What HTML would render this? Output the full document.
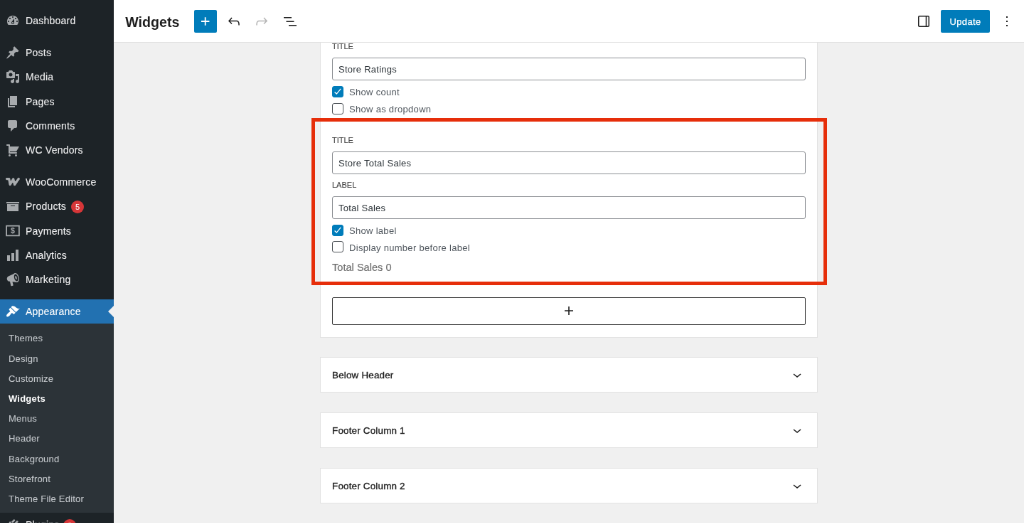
<!DOCTYPE html>
<html lang="en">
<head>
<meta charset="utf-8">
<title>Widgets</title>
<style>
*{box-sizing:border-box;margin:0;padding:0}
html,body{width:1024px;height:523px;overflow:hidden;background:#f0f0f0}
body{font-family:"Liberation Sans",Arial,Helvetica,sans-serif;color:#1e1e1e;-webkit-font-smoothing:antialiased}
#stage{will-change:transform;position:absolute;left:0;top:0;width:1440px;height:736px;transform:scale(0.711111);transform-origin:0 0;background:#f0f0f0;overflow:hidden}
.abs{position:absolute}
/* ---------- sidebar ---------- */
#side{position:absolute;left:0;top:0;width:160px;height:736px;background:#1d2327}
.mi{position:absolute;left:0;width:160px;height:34.2px;color:#f0f0f1;font-size:14px;line-height:34.2px;white-space:nowrap}
.mi .tx{position:absolute;left:36px;top:0;letter-spacing:.22px;-webkit-text-stroke:.1px #f0f0f1}
.mi svg{position:absolute;left:8px;top:7px;width:20px;height:20px;fill:#a7aaad}
.mi.cur{background:#2271b1;color:#fff}
.mi.cur svg{fill:#fff}
.mi.cur:after{content:"";position:absolute;right:0;top:9px;border:8px solid transparent;border-right-color:#f0f0f1}
.badge{position:absolute;width:18px;height:18px;border-radius:9px;background:#d63638;color:#fff;font-size:11px;line-height:18px;text-align:center}
#sub{position:absolute;left:0;top:455.4px;width:160px;height:266px;background:#2c3338}
.si{position:absolute;left:12px;font-size:13px;line-height:18.2px;color:#c2c6ca;white-space:nowrap;letter-spacing:.2px;-webkit-text-stroke:.1px #c2c6ca}
.si.cur{color:#fff;font-weight:bold;-webkit-text-stroke:0}
/* ---------- header ---------- */
#hdr{position:absolute;left:160px;top:0;width:1280px;height:60px;background:#fff;border-bottom:1px solid #e0e0e0}
#hdr h1{position:absolute;left:16.300px;top:17.700px;font-size:19.600px;line-height:26px;font-weight:bold;color:#1e1e1e;letter-spacing:0}
.btn-blue{position:absolute;background:#007cba;border-radius:2px;color:#fff}
/* ---------- content ---------- */
.panel{position:absolute;left:450px;width:700px;background:#fff;border:1px solid #e2e2e2}
.lbl{position:absolute;left:467px;font-size:11px;line-height:14px;text-transform:uppercase;color:#444;letter-spacing:0;margin-top:-.5px;-webkit-text-stroke:.12px #444}
.inp{position:absolute;left:467px;width:666px;height:32px;border:1px solid #8c8f94;border-radius:3px;background:#fff;font-size:13px;line-height:31.2px;padding-left:8px;color:#2c3338;white-space:nowrap;letter-spacing:.25px}
.cb{position:absolute;left:467px;width:16px;height:16px;border:1.2px solid #4d5257;border-radius:3px;background:#fff}
.cb.on{background:#007cba;border-color:#007cba}
.cb svg{position:absolute;left:-1px;top:-1px;width:16px;height:16px}
.cbl{position:absolute;left:491px;font-size:13px;line-height:17.2px;color:#50575e;white-space:nowrap;letter-spacing:.3px}
.pt{position:absolute;left:467px;font-size:13.400px;line-height:19px;color:#1e1e1e;white-space:nowrap;-webkit-text-stroke:.35px #1e1e1e;letter-spacing:.2px}
.chev{position:absolute;left:1109px;width:24px;height:24px}
</style>
</head>
<body>
<div id="stage">

<!-- =============== CONTENT =============== -->
<div class="panel" style="top:40px;height:435px"></div>

<div class="lbl" style="top:58px">Title</div>
<div class="inp" style="top:81px">Store Ratings</div>
<div class="cb on" style="top:121px"><svg viewBox="0 0 16 16"><path d="M3.6 8.6l2.7 2.5L12.2 3.9" fill="none" stroke="#fff" stroke-width="1.3"/></svg></div>
<div class="cbl" style="top:121px">Show count</div>
<div class="cb" style="top:145px"></div>
<div class="cbl" style="top:145px">Show as dropdown</div>

<div class="lbl" style="top:190px">Title</div>
<div class="inp" style="top:213px">Store Total Sales</div>
<div class="lbl" style="top:253px">Label</div>
<div class="inp" style="top:276px">Total Sales</div>
<div class="cb on" style="top:315.500px"><svg viewBox="0 0 16 16"><path d="M3.6 8.6l2.7 2.5L12.2 3.9" fill="none" stroke="#fff" stroke-width="1.3"/></svg></div>
<div class="cbl" style="top:316px">Show label</div>
<div class="cb" style="top:339.300px"></div>
<div class="cbl" style="top:340px">Display number before label</div>
<div class="abs" style="left:467px;top:365px;font-size:14.600px;line-height:22px;color:#6d6d6d;-webkit-text-stroke:.15px #6d6d6d;white-space:nowrap">Total Sales 0</div>

<div class="abs" style="left:467px;top:418px;width:666px;height:39px;border:1px solid #3c3c3c;border-radius:2px;background:#fff"></div>
<svg class="abs" style="left:788px;top:425px;width:24px;height:24px" viewBox="0 0 24 24"><path d="M18 11.2h-5.2V6h-1.600v5.200H6v1.600h5.200V18h1.600v-5.200H18z" fill="#1e1e1e"/></svg>

<div class="panel" style="top:502px;height:50px"></div>
<div class="pt" style="top:518px">Below Header</div>
<svg class="chev" style="top:515px" viewBox="0 0 24 24"><path d="M17.500 11.600L12 16l-5.500-4.400.900-1.200L12 14l4.500-3.600 1 1.200z" fill="#1e1e1e"/></svg>

<div class="panel" style="top:580px;height:50px"></div>
<div class="pt" style="top:596px">Footer Column 1</div>
<svg class="chev" style="top:593px" viewBox="0 0 24 24"><path d="M17.500 11.600L12 16l-5.500-4.400.900-1.200L12 14l4.500-3.600 1 1.200z" fill="#1e1e1e"/></svg>

<div class="panel" style="top:658px;height:50px"></div>
<div class="pt" style="top:674px">Footer Column 2</div>
<svg class="chev" style="top:671px" viewBox="0 0 24 24"><path d="M17.500 11.600L12 16l-5.500-4.400.900-1.200L12 14l4.500-3.600 1 1.200z" fill="#1e1e1e"/></svg>

<!-- red annotation -->
<div class="abs" style="left:438.400px;top:166.300px;width:724.600px;height:234.800px;border:5.400px solid #e62e0a"></div>

<!-- =============== HEADER =============== -->
<div id="hdr">
  <h1>Widgets</h1>
  <div class="btn-blue" style="left:113px;top:14px;width:32px;height:32px">
    <svg style="position:absolute;left:4px;top:4px;width:24px;height:24px" viewBox="0 0 24 24"><path d="M17.400 11.100h-4.800V6.300h-1.800v4.800H6v1.800h4.800v4.800h1.800v-4.800h4.800z" fill="#fff"/></svg>
  </div>
  <svg class="abs" style="left:157px;top:18px;width:24px;height:24px" viewBox="0 0 24 24"><path d="M18.300 11.700c-.600-.600-1.400-.900-2.300-.900H6.700l2.900-3.300-1.100-1-4.500 5L8.500 16l1-1-2.700-2.700H16c.5 0 .9.200 1.300.5 1 1 1 3.400 1 4.500v.3h1.500v-.2c0-1.500 0-4.300-1.500-5.700z" fill="#1e1e1e"/></svg>
  <svg class="abs" style="left:196px;top:18px;width:24px;height:24px" viewBox="0 0 24 24"><path d="M15.600 6.500l-1.100 1 2.900 3.300H8c-.9 0-1.700.3-2.300.9-1.400 1.500-1.400 4.200-1.400 5.600v.2h1.500v-.3c0-1.100 0-3.500 1-4.500.3-.3.700-.5 1.300-.5h9.200L14.500 15l1.100 1.100 4.600-4.600-4.600-5z" fill="#b4b4b4"/></svg>
  <svg class="abs" style="left:236px;top:18px;width:24px;height:24px" viewBox="0 0 24 24"><path d="M3 6h11v1.500H3V6zm3.500 5.500h11V13h-11v-1.500zM10 17h11v1.500H10V17z" fill="#1e1e1e"/></svg>

  <svg class="abs" style="left:1127px;top:18px;width:24px;height:24px" viewBox="0 0 24 24"><path d="M18 4H6c-1.100 0-2 .9-2 2v12c0 1.100.9 2 2 2h12c1.100 0 2-.9 2-2V6c0-1.100-.9-2-2-2zm-3.300 14.500H6c-.3 0-.5-.2-.5-.5V6c0-.3.2-.5.5-.5h8.700v13zm3.800-.5c0 .3-.2.500-.5.500h-1.800v-13H18c.3 0 .5.200.5.500v12z" fill="#1e1e1e"/></svg>
  <div class="btn-blue" style="left:1163px;top:14px;width:69px;height:32px;font-size:13px;line-height:34px;text-align:center;letter-spacing:.35px;-webkit-text-stroke:.25px #fff">Update</div>
  <svg class="abs" style="left:1244px;top:18px;width:24px;height:24px" viewBox="0 0 24 24"><path d="M13 19h-2v-2h2v2zm0-6h-2v-2h2v2zm0-6h-2V5h2v2z" fill="#1e1e1e"/></svg>
</div>

<!-- =============== SIDEBAR =============== -->
<div id="side">
  <div class="mi" style="top:12.0px"><svg viewBox="0 0 20 20"><path d="M3.760 16h12.480c1.100-1.370 1.760-3.110 1.760-5 0-4.420-3.580-8-8-8s-8 3.580-8 8c0 1.890.66 3.630 1.760 5zM10 4c.550 0 1 .450 1 1s-.450 1-1 1-1-.450-1-1 .450-1 1-1zM6 6c.550 0 1 .450 1 1s-.450 1-1 1-1-.450-1-1 .450-1 1-1zm8 0c.550 0 1 .450 1 1s-.450 1-1 1-1-.450-1-1 .450-1 1-1zm-5.370 5.550L12 7v6c0 1.100-.9 2-2 2s-2-.9-2-2c0-.570.240-1.080.630-1.450zM4 10c.550 0 1 .450 1 1s-.450 1-1 1-1-.450-1-1 .450-1 1-1zm12 0c.550 0 1 .450 1 1s-.450 1-1 1-1-.450-1-1 .450-1 1-1zm-5 3c0-.550-.450-1-1-1s-1 .450-1 1 .450 1 1 1 1-.450 1-1z"/></svg><span class="tx">Dashboard</span></div>

  <div class="mi" style="top:57.2px"><svg viewBox="0 0 20 20"><path d="M10.440 3.020l1.820-1.820 6.360 6.350-1.830 1.820c-1.050-.680-2.480-.570-3.410.360l-.750.750c-.920.930-1.040 2.350-.350 3.410l-1.830 1.820-2.410-2.410-2.800 2.790c-.420.420-3.380 2.710-3.800 2.290s1.860-3.390 2.280-3.810l2.790-2.790L4.100 9.360l1.830-1.820c1.050.690 2.480.570 3.400-.360l.750-.750c.930-.920 1.050-2.350.360-3.410z"/></svg><span class="tx">Posts</span></div>

  <div class="mi" style="top:91.4px"><svg viewBox="0 0 20 20"><path d="M13 11V4c0-.550-.450-1-1-1h-1.670L9 1H5L3.670 3H2c-.550 0-1 .450-1 1v7c0 .550.450 1 1 1h10c.550 0 1-.450 1-1zM7 4.500c1.380 0 2.500 1.120 2.500 2.500S8.380 9.500 7 9.500 4.500 8.380 4.500 7 5.620 4.500 7 4.500zM14 6h5v10.500c0 1.380-1.120 2.500-2.500 2.500S14 17.880 14 16.500s1.120-2.500 2.500-2.500c.170 0 .340.020.5.050V9h-3V6zm-4 8.050V13h2v3.500c0 1.380-1.120 2.500-2.500 2.500S7 17.880 7 16.500 8.120 14 9.500 14c.170 0 .340.020.5.050z"/></svg><span class="tx">Media</span></div>

  <div class="mi" style="top:125.6px"><svg viewBox="0 0 20 20"><path d="M6 15V2h10v13H6zm-1 1h8v2H3V5h2v11z"/></svg><span class="tx">Pages</span></div>

  <div class="mi" style="top:159.8px"><svg viewBox="0 0 20 20"><path d="M5 2h9c1.100 0 2 .9 2 2v7c0 1.100-.9 2-2 2h-2l-5 5v-5H5c-1.100 0-2-.9-2-2V4c0-1.100.9-2 2-2z"/></svg><span class="tx">Comments</span></div>

  <div class="mi" style="top:194.0px"><svg viewBox="0 0 20 20"><path d="M6 13h9c.550 0 1 .450 1 1s-.450 1-1 1H5c-.550 0-1-.450-1-1V4H2c-.550 0-1-.450-1-1s.450-1 1-1h3c.550 0 1 .450 1 1v2h13l-4 7H6v1zm-.5 3c.830 0 1.500.670 1.500 1.500S6.330 19 5.500 19 4 18.330 4 17.500 4.670 16 5.500 16zm9 0c.830 0 1.500.670 1.500 1.500s-.670 1.500-1.500 1.500-1.500-.670-1.500-1.500.670-1.500 1.500-1.500z"/></svg><span class="tx">WC Vendors</span></div>

  <div class="mi" style="top:239.2px"><svg viewBox="0 0 20 20"><path d="M1.600 5.600H4.700L6.200 13.500L10.700 5.800L12.600 13.500L18.200 5.500" fill="none" stroke="#a7aaad" stroke-width="3.300" stroke-linejoin="round" stroke-linecap="round"/></svg><span class="tx">WooCommerce</span></div>

  <div class="mi" style="top:273.4px"><svg viewBox="0 0 20 20"><path d="M19 4v2H1V4h18zM2 7h16v10H2V7zm11 3V9H7v1h6z"/></svg><span class="tx">Products</span><span class="badge" style="left:100px;top:8.500px">5</span></div>

  <div class="mi" style="top:307.6px"><svg viewBox="0 0 20 20"><path d="M0.200 1.800h19.600v15.400H0.200zM2 3.600v11.800h16V3.600z" fill-rule="evenodd"/><text x="10" y="13.300" font-family="Liberation Sans, sans-serif" font-size="10.500" font-weight="bold" text-anchor="middle">$</text></svg><span class="tx">Payments</span></div>

  <div class="mi" style="top:341.8px"><svg viewBox="0 0 20 20"><path d="M18 18V2h-4v16h4zm-6 0V7H8v11h4zm-6 0v-8H2v8h4z"/></svg><span class="tx">Analytics</span></div>

  <div class="mi" style="top:376.0px"><svg viewBox="0 0 20 20"><path d="M13.600 1.100L3.900 5.600C2.300 6.400 1.400 8.200 1.900 10c.5 1.900 2.200 3 4 2.800l.100 0 1.300 5.700c.1.500.6.800 1.100.7l1.500-.4c.5-.1.800-.6.700-1.100L9.500 13.200l6.400.7z"/><ellipse cx="14.700" cy="7.500" rx="3.900" ry="6.600" transform="rotate(-15 14.700 7.500)"/><ellipse cx="14.700" cy="7.500" rx="2.700" ry="5.200" transform="rotate(-15 14.700 7.500)" fill="#1d2327"/><ellipse cx="14.500" cy="7.500" rx="1.100" ry="2.500" transform="rotate(-15 14.500 7.500)"/></svg><span class="tx">Marketing</span></div>

  <div class="mi cur" style="top:421.2px"><svg viewBox="0 0 20 20"><path d="M14.480 11.060L7.410 3.990l1.500-1.500c.5-.560 2.300-.470 3.510.320 1.210.8 1.430 1.280 2.910 2.100 1.180.640 2.450 1.260 4.450.850zm-.710.710L6.700 4.700 4.930 6.470c-.390.390-.390 1.020 0 1.410l1.060 1.060c.390.390.390 1.030 0 1.420-.6.600-1.430 1.110-2.210 1.690-.350.260-.7.530-1.010.840C1.430 14.230.4 16.080 1.400 17.070c.990 1 2.840-.030 4.180-1.360.310-.310.580-.660.850-1.020.570-.780 1.080-1.610 1.690-2.210.390-.390 1.020-.390 1.410 0l1.060 1.060c.390.390 1.020.390 1.410 0z"/></svg><span class="tx">Appearance</span></div>

  <div id="sub">
    <div class="si" style="top:12.0px">Themes</div>
    <div class="si" style="top:40.2px">Design</div>
    <div class="si" style="top:68.4px">Customize</div>
    <div class="si cur" style="top:96.6px">Widgets</div>
    <div class="si" style="top:124.8px">Menus</div>
    <div class="si" style="top:153.0px">Header</div>
    <div class="si" style="top:181.2px">Background</div>
    <div class="si" style="top:209.4px">Storefront</div>
    <div class="si" style="top:237.6px">Theme File Editor</div>
  </div>

  <div class="mi" style="top:721.4px"><svg viewBox="0 0 20 20"><path d="M13.110 4.360L9.870 7.600 8 5.730l3.240-3.240c.350-.340 1.050-.2 1.560.320.520.510.660 1.210.310 1.550zm-8 1.770l.910-1.120 9.010 9.010-1.190.840c-.710.710-2.630 1.160-3.820 1.160H6.140L4.900 17.260c-.590.590-1.540.590-2.120 0-.590-.580-.590-1.530 0-2.120L4 13.900v-3.870c0-1.190.390-3.190 1.110-3.900zm7.260 1.470l1.870 1.870 3.240-3.240c.350-.340.210-1.040-.310-1.550-.510-.520-1.210-.660-1.560-.320z"/></svg><span class="tx">Plugins</span><span class="badge" style="left:89px;top:8.500px">2</span></div>
</div>

</div>
</body>
</html>
